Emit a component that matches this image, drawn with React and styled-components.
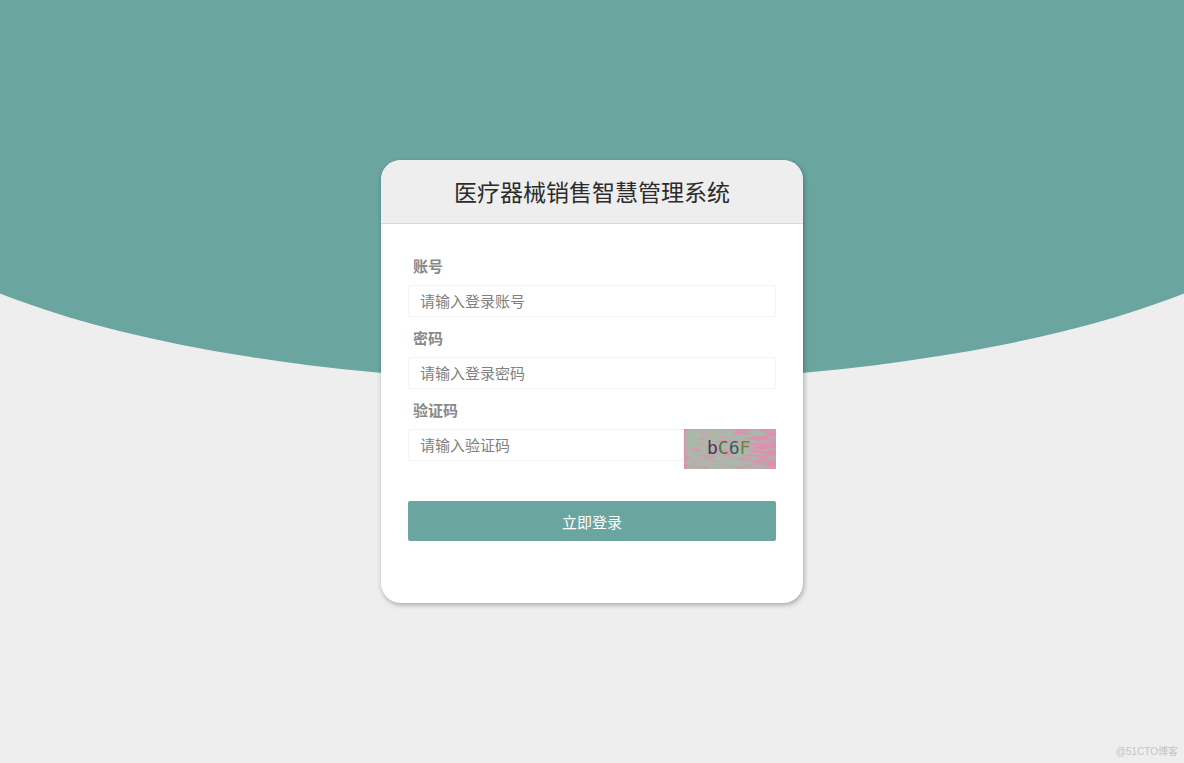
import { useState } from 'react';
import { createGlobalStyle, styled } from 'styled-components';

const GlobalStyle = createGlobalStyle`
  * {
    box-sizing: border-box;
  }
  body {
    margin: 0;
    background: #eee;
    font-family: 'Liberation Sans', 'Noto Sans CJK SC', sans-serif;
  }
`;

const Page = styled.div`
  display: grid;
  grid-template: minmax(100vh, auto) / 100%;
  overflow: hidden;
  > * {
    grid-area: 1 / 1;
  }
`;
const Backdrop = styled.div`
  justify-self: center;
  width: 125%;
  height: 50vh;
  background: #6aa5a0;
  border-radius: 0 0 50% 50% / 0 0 58% 58%;
`;
const Card = styled.main`
  place-self: center;
  width: 422px;
  max-width: 100%;
  background: #fff;
  border-radius: 20px;
  overflow: hidden;
  box-shadow: 1px 2px 5px rgba(0, 0, 0, 0.3);
`;
const Title = styled.h1`
  margin: 0;
  padding: 17px 0 14px;
  background: #eee;
  border-bottom: 1px solid #d8d8d8;
  color: #2b2b2b;
  font-size: 23px;
  font-weight: 400;
  line-height: 32px;
  text-align: center;
`;
const Form = styled.form`
  display: flex;
  flex-direction: column;
  padding: 21px 27px 62px;
`;
const Field = styled.div`
  display: flex;
  flex-direction: column;
`;
const Label = styled.label`
  padding: 4px 5px 0;
  color: #888;
  font-size: 15px;
  font-weight: 700;
  line-height: 36px;
`;
const Row = styled.div`
  display: flex;
  align-items: flex-start;
`;
const Input = styled.input`
  flex: 1;
  min-width: 0;
  height: 32px;
  padding: 0 11px;
  border: 1px solid #f3f3f3;
  border-radius: 2px;
  background: #fff;
  color: #333;
  font-family: inherit;
  font-size: 15px;
  outline: none;
  &::placeholder {
    color: #808080;
    opacity: 1;
  }
`;
const Captcha = styled.svg`
  display: block;
  flex: none;
  width: 92px;
  height: 40px;
`;
const Submit = styled.button`
  height: 40px;
  margin-top: 32px;
  border: 0;
  border-radius: 2px;
  background: #6aa5a0;
  color: #fff;
  font-family: inherit;
  font-size: 15px;
  cursor: pointer;
`;
const Watermark = styled.footer`
  place-self: end;
  padding: 0 6px 4px;
  color: #c4c4c4;
  font-size: 10px;
  line-height: 15px;
`;

const fields = [
  { id: 'account', label: '账号', type: 'text', hint: '请输入登录账号' },
  { id: 'password', label: '密码', type: 'password', hint: '请输入登录密码' },
  { id: 'code', label: '验证码', type: 'text', hint: '请输入验证码' },
];

// horizontal pink noise, denser towards the right edge
const CaptchaImage = () => (
  <Captcha viewBox="0 0 92 40" role="img" aria-label="验证码">
    <defs>
      <linearGradient id="density">
        <stop offset="0" stopOpacity="0.6" />
        <stop offset="0.05" stopOpacity="0.3" />
        <stop offset="0.5" stopOpacity="0.32" />
        <stop offset="0.8" stopOpacity="0.42" />
        <stop offset="1" stopOpacity="0.66" />
      </linearGradient>
      <filter id="noise" x="0" y="0" width="1" height="1" colorInterpolationFilters="sRGB">
        <feTurbulence
          type="fractalNoise"
          baseFrequency="0.06 0.35"
          numOctaves="3"
          seed="4"
        />
        <feColorMatrix values="0 0 0 0 0  0 0 0 0 0  0 0 0 0 0  1 0 0 0 0" result="grain" />
        <feComposite
          in="SourceGraphic"
          in2="grain"
          operator="arithmetic"
          k2="0.5"
          k3="0.5"
        />
        <feColorMatrix values="0 0 0 0 0.89  0 0 0 0 0.55  0 0 0 0 0.7  0 0 0 6 -2.4" />
      </filter>
    </defs>
    <rect width="92" height="40" fill="#a9b8a9" />
    <rect width="92" height="40" fill="url(#density)" filter="url(#noise)" />
    <path d="M0 0h92" stroke="#e48eb2" strokeWidth="2" opacity="0.7" />
    <text x="23" y="25" fontSize="18" fontFamily="'DejaVu Sans Mono', monospace">
      <tspan fill="#5b3057">b</tspan>
      <tspan fill="#3f8040">C</tspan>
      <tspan fill="#345f62">6</tspan>
      <tspan fill="#718448">F</tspan>
    </text>
  </Captcha>
);

const App = () => {
  const [values, setValues] = useState({ account: '', password: '', code: '' });

  return (
    <>
      <GlobalStyle />
      <Page>
        <Backdrop />
        <Card>
          <Title>医疗器械销售智慧管理系统</Title>
          <Form onSubmit={(e) => e.preventDefault()}>
            {fields.map(({ id, label, type, hint }) => (
              <Field key={id}>
                <Label htmlFor={id}>{label}</Label>
                <Row>
                  <Input
                    id={id}
                    type={type}
                    placeholder={hint}
                    value={values[id]}
                    onChange={(e) => setValues({ ...values, [id]: e.target.value })}
                  />
                  {id === 'code' && <CaptchaImage />}
                </Row>
              </Field>
            ))}
            <Submit type="submit">立即登录</Submit>
          </Form>
        </Card>
        <Watermark>@51CTO博客</Watermark>
      </Page>
    </>
  );
};

export default App;
